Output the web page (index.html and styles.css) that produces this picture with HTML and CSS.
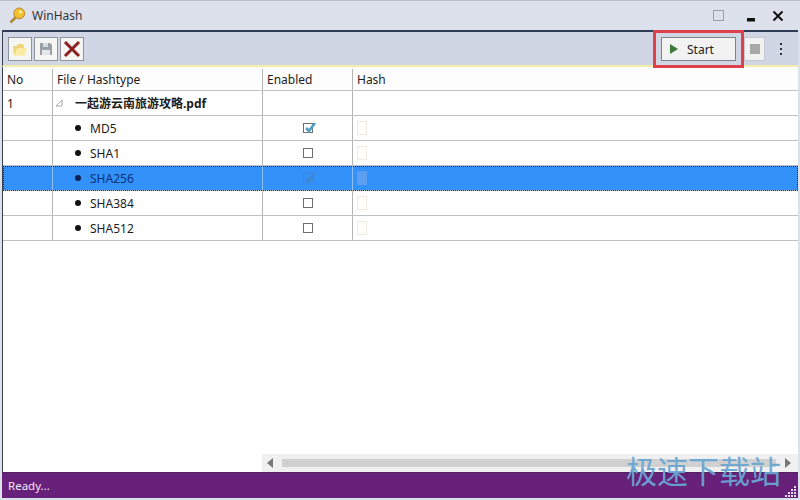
FILE: index.html
```html
<!DOCTYPE html>
<html lang="en">
<head>
<meta charset="utf-8">
<title>WinHash</title>
<link rel="stylesheet" href="styles.css">
</head>
<body>
<div class="window">
  <header class="titlebar">
    <svg class="appicon" width="18" height="18" viewBox="0 0 18 18"><path d="M9 9 L2.5 15.5" stroke="#b08a3a" stroke-width="2.6" fill="none"/><circle cx="11.2" cy="6.4" r="5.4" fill="#f0c030" stroke="#b8862a"/><circle cx="12.5" cy="5" r="1.6" fill="#fff2b0"/></svg>
    <span class="apptitle">WinHash</span>
    <span class="winbtns">
      <svg class="maxbtn" width="12" height="14" viewBox="0 0 12 14"><rect x="0.5" y="1.5" width="10" height="10" fill="none" stroke="#9a9fab"/></svg>
      <svg width="12" height="12" viewBox="0 0 12 12"><rect x="2" y="8" width="8" height="3.5" fill="#111"/></svg>
      <svg width="12" height="12" viewBox="0 0 12 12"><path d="M1.5 1.5 L10.5 10.5 M10.5 1.5 L1.5 10.5" stroke="#111" stroke-width="2"/></svg>
    </span>
  </header>
  <div class="toolbar">
    <button class="tool">
      <svg width="16" height="15" viewBox="0 0 16 15"><path d="M2 13 L1 4 H5 L6 2 H11 L12 5 V13 Z" fill="#eed678"/><path d="M2.5 13.5 L5 6 H15 L12.5 13.5 Z" fill="#fbeba2"/></svg>
    </button>
    <button class="tool">
      <svg width="14" height="14" viewBox="0 0 14 14"><path d="M1 1 H11 L13 3 V13 H1 Z" fill="#9aa0a8"/><rect x="4" y="1" width="5" height="4" fill="#d8dbe0"/><rect x="3" y="8" width="8" height="5" fill="#e4e6ea"/></svg>
    </button>
    <button class="tool">
      <svg width="18" height="18" viewBox="0 0 18 18"><path d="M2 2 L16 16 M16 2 L2 16" stroke="#8a1f1f" stroke-width="3"/></svg>
    </button>
    <span class="spacer"></span>
    <button class="start">
      <svg width="8" height="10" viewBox="0 0 8 10"><path d="M0 0 L8 5 L0 10 Z" fill="#3d7a3a"/></svg>
      <span>Start</span>
    </button>
    <button class="stop"><span class="stopmark"></span></button>
    <span class="more"><i></i><i></i><i></i></span>
    <span class="highlight"></span>
  </div>
  <main class="table">
    <div class="row head">
      <div class="cell">No</div>
      <div class="cell">File / Hashtype</div>
      <div class="cell">Enabled</div>
      <div class="cell">Hash</div>
    </div>
    <div class="row">
      <div class="cell">1</div>
      <div class="cell filecell"><svg class="expander" width="8" height="8" viewBox="0 0 8 8"><path d="M7 1 V7 H1 Z" fill="none" stroke="#a8a8a8"/></svg><b class="fname">一起游云南旅游攻略.pdf</b></div>
      <div class="cell"></div>
      <div class="cell"></div>
    </div>
    <div class="row">
      <div class="cell"></div>
      <div class="cell hashcell"><i class="dot"></i>MD5</div>
      <div class="cell center"><span class="check on"><svg width="14" height="13" viewBox="0 0 14 13"><path d="M3 7 L6 10 L12 2" fill="none" stroke="#4d9fc9" stroke-width="2.6"/></svg></span></div>
      <div class="cell"><span class="doc"></span></div>
    </div>
    <div class="row">
      <div class="cell"></div>
      <div class="cell hashcell"><i class="dot"></i>SHA1</div>
      <div class="cell center"><span class="check"></span></div>
      <div class="cell"><span class="doc"></span></div>
    </div>
    <div class="row selected">
      <div class="cell"></div>
      <div class="cell hashcell"><i class="dot"></i>SHA256</div>
      <div class="cell center"><span class="check on"><svg width="14" height="13" viewBox="0 0 14 13"><path d="M3 7 L6 10 L12 2" fill="none" stroke="#4d9fc9" stroke-width="2.6"/></svg></span></div>
      <div class="cell"><span class="doc"></span></div>
    </div>
    <div class="row">
      <div class="cell"></div>
      <div class="cell hashcell"><i class="dot"></i>SHA384</div>
      <div class="cell center"><span class="check"></span></div>
      <div class="cell"><span class="doc"></span></div>
    </div>
    <div class="row">
      <div class="cell"></div>
      <div class="cell hashcell"><i class="dot"></i>SHA512</div>
      <div class="cell center"><span class="check"></span></div>
      <div class="cell"><span class="doc"></span></div>
    </div>
    <div class="hscroll">
      <span class="arrow left"></span>
      <span class="thumb"></span>
      <span class="arrow right"></span>
    </div>
  </main>
  <footer class="status">
    <span>Ready...</span>
    <svg class="grip" width="12" height="12" viewBox="0 0 12 12" fill="#e4dcea"><rect x="9" y="1" width="2" height="2"/><rect x="6" y="4" width="2" height="2"/><rect x="9" y="4" width="2" height="2"/><rect x="3" y="7" width="2" height="2"/><rect x="6" y="7" width="2" height="2"/><rect x="9" y="7" width="2" height="2"/><rect x="0" y="10" width="2" height="2"/><rect x="3" y="10" width="2" height="2"/><rect x="6" y="10" width="2" height="2"/><rect x="9" y="10" width="2" height="2"/></svg>
  </footer>
</div>
<div class="watermark">极速下载站</div>
</body>
</html>
```
FILE: styles.css
```css
* { box-sizing: border-box; }
html, body { margin: 0; padding: 0; }
body {
  width: 800px;
  height: 500px;
  overflow: hidden;
  position: relative;
  font-family: "Noto Sans", "Noto Sans CJK SC", sans-serif;
  font-size: 12px;
  color: #1c1c1c;
  background: #cdd3e2;
}
.window {
  height: 500px;
  display: flex;
  flex-direction: column;
  padding: 0 2px 2px 2px;
  background: #dde1ec;
  border-top: 1px solid #b9bdc9;
}
.titlebar {
  height: 29px;
  flex: none;
  display: flex;
  align-items: center;
  padding: 0 14px 0 6px;
}
.appicon { margin-right: 6px; }
.apptitle { font-size: 12px; color: #333; }
.winbtns { margin-left: auto; display: flex; gap: 15px; align-items: center; }
.maxbtn { margin-right: 5px; }
.toolbar {
  height: 37px;
  flex: none;
  position: relative;
  display: flex;
  align-items: center;
  gap: 2px;
  padding: 1px 5px 0 5px;
  background: #d0d6e4;
  border-top: 2px solid #2f3e58;
  border-left: 1px solid #39404f;
  border-bottom: 2px solid #f2eda8;
}
.tool {
  width: 24px;
  height: 24px;
  padding: 0;
  display: flex;
  align-items: center;
  justify-content: center;
  background: #f5f5f3;
  border: 1px solid #8f939b;
}
.spacer { flex: 1; }
.start {
  width: 75px;
  height: 24px;
  display: flex;
  align-items: center;
  gap: 9px;
  padding: 0 0 0 8px;
  background: #f2f2f2;
  border: 1px solid #7d828c;
  font: inherit;
  font-size: 12px;
  color: #222;
}
.stop {
  width: 21px;
  height: 24px;
  margin-left: 6px;
  padding: 0;
  display: flex;
  align-items: center;
  justify-content: center;
  background: #f2f2f2;
  border: 1px solid #c5c8d0;
}
.stopmark { width: 10px; height: 10px; background: #a9a9a9; }
.more {
  width: 3px;
  margin-left: 13px;
  margin-right: 10px;
  display: flex;
  flex-direction: column;
  gap: 3px;
}
.more i { width: 2px; height: 2px; background: #333; display: block; }
.highlight {
  position: absolute;
  right: 54px;
  top: -2px;
  width: 91px;
  height: 38px;
  border: 3px solid #df3f4a;
}
.table {
  flex: 1;
  display: flex;
  flex-direction: column;
  background: #fff;
  border-left: 1px solid #39404f;
}
.row {
  height: 25px;
  flex: none;
  display: grid;
  grid-template-columns: 50px 210px 90px 1fr;
  border-bottom: 1px solid #c2c2c2;
}
.row.head { height: 24px; background: #fdfdfd; padding-top: 2px; }
.cell {
  display: flex;
  align-items: center;
  padding-left: 4px;
  border-right: 1px solid #b4b4b4;
  min-width: 0;
}
.cell:last-child { border-right: 0; }
.center { justify-content: center; padding-left: 0; }
.filecell { padding-left: 2px; }
.expander { margin-right: 12px; }
.fname { font-weight: 700; }
.hashcell { padding-left: 22px; }
.dot {
  width: 6px;
  height: 6px;
  margin-right: 9px;
  border-radius: 50%;
  background: #111;
}
.check {
  position: relative;
  width: 10px;
  height: 10px;
  border: 1px solid #6f6f6f;
  background: #fff;
}
.check svg { position: absolute; left: -1px; top: -3px; }
.doc {
  width: 10px;
  height: 14px;
  background: #fffefb;
  border: 1px solid #f0ebe0;
}
.selected {
  height: 25px;
  background: #3292fa;
  outline: 1px dotted #0e2850;
  outline-offset: -1px;
}
.selected .cell { border-right-color: #8fc0f5; color: #0d2f74; }
.selected .dot { background: #0b1f52; }
.selected .check { background: transparent; border-color: #3f86d8; }
.selected .check svg path { stroke: #3f86d8; }
.selected .doc { background: #5c9ff0; border-color: #5c9ff0; }
.hscroll {
  margin-top: auto;
  margin-left: 259px;
  height: 18px;
  flex: none;
  display: flex;
  align-items: center;
  gap: 9px;
  padding: 0 7px 0 5px;
  background: #f0f0f0;
}
.thumb { flex: 1; height: 8px; background: #d0d0d0; }
.arrow { width: 0; height: 0; border-top: 5px solid transparent; border-bottom: 5px solid transparent; }
.arrow.left { border-right: 6px solid #777; }
.arrow.right { border-left: 6px solid #777; }
.status {
  height: 26px;
  flex: none;
  display: flex;
  align-items: center;
  justify-content: space-between;
  padding: 0 0 0 6px;
  background: #68217a;
  border-top: 1px solid #54215f;
  color: #f0e8f4;
  font-size: 11.5px;
  position: relative;
}
.grip { position: absolute; right: 1px; bottom: 1px; }
.watermark {
  position: absolute;
  left: 626px;
  top: 450px;
  font-family: "Noto Sans CJK SC", sans-serif;
  font-size: 31px;
  line-height: 40px;
  color: #6aa6d2;
  opacity: .95;
  white-space: nowrap;
}
```
